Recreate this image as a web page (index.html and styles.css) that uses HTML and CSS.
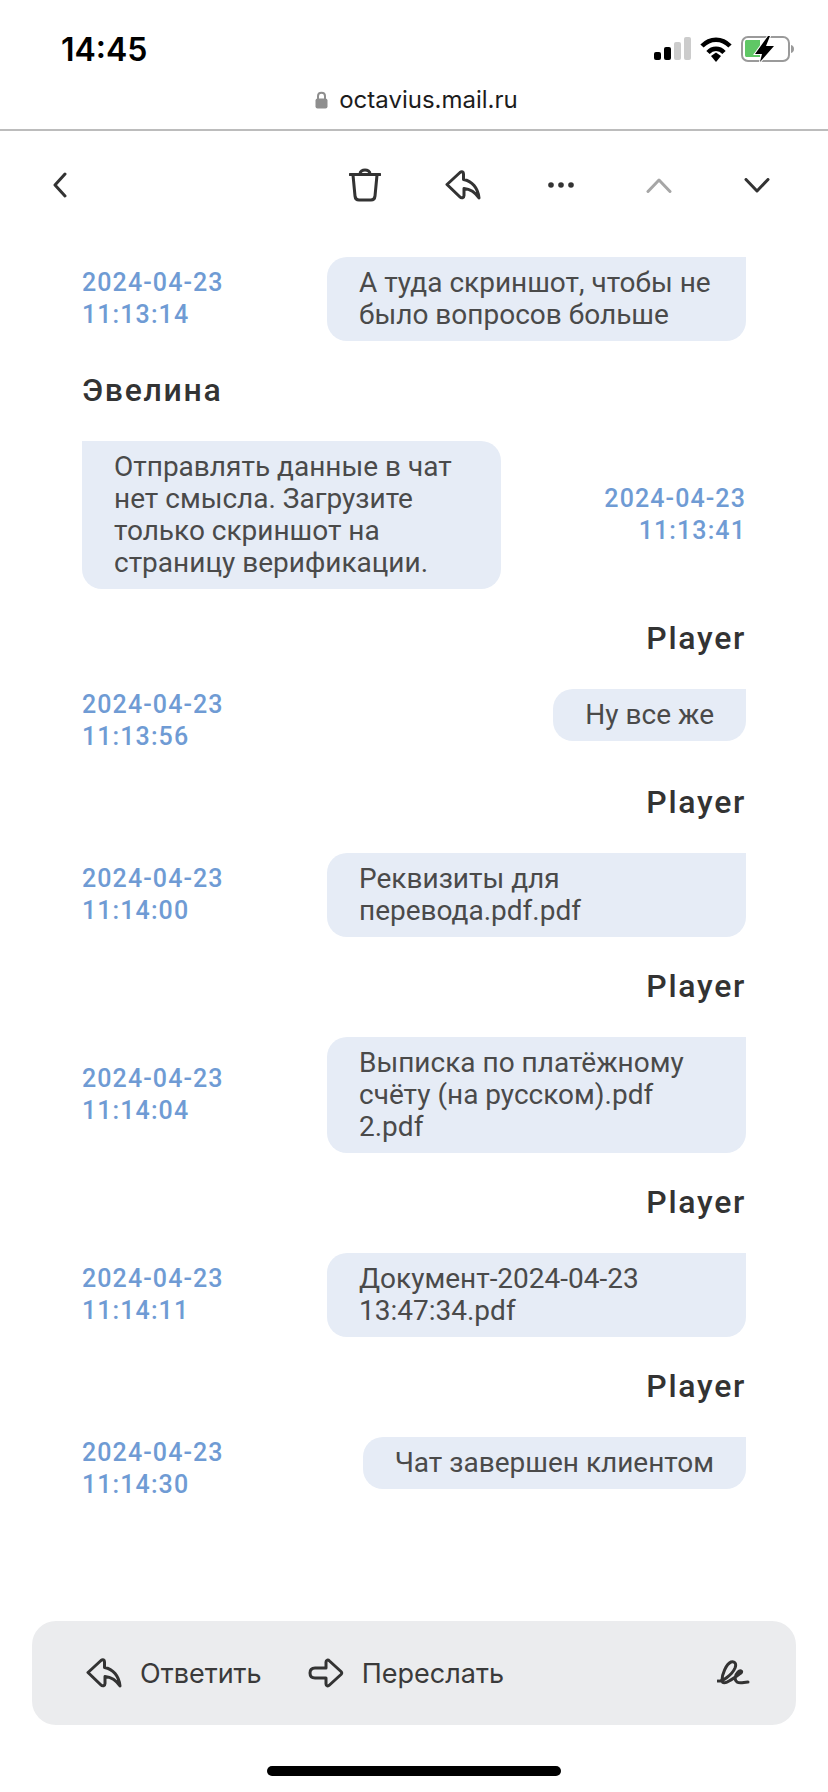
FILE: index.html
```html
<!DOCTYPE html>
<html lang="ru">
<head>
    <meta charset="UTF-8">
    <meta name="viewport" content="width=device-width, initial-scale=1.0">
    <title>octavius.mail.ru</title>
    <link rel="stylesheet" href="styles.css">
</head>
<body>
    <header class="status-bar">
        <span class="status-time">14:45</span>
        <div class="status-icons">
            <svg class="signal-icon" width="37" height="24" viewBox="0 0 37 24">
                <rect x="0" y="15" width="7" height="8" rx="2" fill="#000"/>
                <rect x="10" y="10" width="7" height="13" rx="2" fill="#000"/>
                <rect x="20" y="5" width="7" height="18" rx="2" fill="#ccc"/>
                <rect x="30" y="0" width="7" height="23" rx="2" fill="#ccc"/>
            </svg>
            <svg class="wifi-icon" width="32" height="25" viewBox="0 0 32 25">
                <path d="M2 9C10 0.500 22 0.500 30 9" fill="none" stroke="#000" stroke-width="4.500"/>
                <path d="M8 15.500C12.500 10.500 19.500 10.500 24 15.500" fill="none" stroke="#000" stroke-width="4.500"/>
                <path d="M11 19L16 15.500L21 19L16 25Z" fill="#000"/>
            </svg>
            <svg class="battery-icon" width="53" height="28" viewBox="0 0 53 28">
                <rect x="1" y="2" width="47" height="24" rx="6" fill="none" stroke="#9a9a9a" stroke-width="2"/>
                <path d="M50 10C52 10.500 53 12 53 14C53 16 52 17.500 50 18Z" fill="#9a9a9a"/>
                <path d="M6 5H19V22H6C4.500 22 4 21.500 4 20V7C4 5.500 4.500 5 6 5Z" fill="#5fc765"/>
                <path d="M27 1L14 19H21L19 27L33 11H25L29 1Z" fill="#000" stroke="#fff" stroke-width="2" paint-order="stroke"/>
            </svg>
        </div>
    </header>

    <div class="url-bar">
        <svg width="13" height="18" viewBox="0 0 13 18">
            <path d="M3 8V5C3 0.500 10 0.500 10 5V8" fill="none" stroke="#8e8e8e" stroke-width="2"/>
            <rect x="0.500" y="7.500" width="12" height="10" rx="2" fill="#8e8e8e"/>
        </svg>
        <span>octavius.mail.ru</span>
    </div>

    <nav class="toolbar">
        <button class="tool-btn back-btn">
            <svg width="14" height="26" viewBox="0 0 14 26"><path d="M12 2L2 13L12 24" class="line"/></svg>
        </button>
        <button class="tool-btn">
            <svg width="32" height="34" viewBox="0 0 32 34">
                <path d="M1 6.500H31" class="line"/>
                <path d="M11 6C11 0.500 21 0.500 21 6" class="line"/>
                <path d="M4 7L6 28C6.300 31 8 32 10 32H22C24 32 25.700 31 26 28L28 7" class="line"/>
            </svg>
        </button>
        <button class="tool-btn">
            <svg width="36" height="30" viewBox="0 0 36 30">
                <path d="M2 14.500L15 2.500C17 1 18.500 2 18.500 4V9.500C27 11 33 18 34 28C30 22 25 19 19 18.500V25.500C19 28 16.500 28.500 15 27Z" class="line"/>
            </svg>
        </button>
        <button class="tool-btn">
            <svg width="26" height="6" viewBox="0 0 26 6">
                <circle cx="3" cy="3" r="2.800" fill="#333"/>
                <circle cx="13" cy="3" r="2.800" fill="#333"/>
                <circle cx="23" cy="3" r="2.800" fill="#333"/>
            </svg>
        </button>
        <button class="tool-btn">
            <svg width="28" height="15" viewBox="0 0 28 15"><path d="M3 13.500L14 2L25 13.500" class="line line-muted"/></svg>
        </button>
        <button class="tool-btn">
            <svg width="28" height="15" viewBox="0 0 28 15"><path d="M3 1.500L14 13L25 1.500" class="line"/></svg>
        </button>
    </nav>

    <main class="chat">
        <div class="msg-row">
            <div class="msg-date">2024-04-23<br>11:13:14</div>
            <div class="bubble bubble-own">А туда скриншот, чтобы не было вопросов больше</div>
        </div>

        <div class="msg-name">Эвелина</div>
        <div class="msg-row">
            <div class="bubble bubble-other">Отправлять данные в чат нет смысла. Загрузите только скриншот на страницу верификации.</div>
            <div class="msg-date msg-date-right">2024-04-23<br>11:13:41</div>
        </div>

        <div class="msg-name msg-name-right">Player</div>
        <div class="msg-row">
            <div class="msg-date">2024-04-23<br>11:13:56</div>
            <div class="bubble bubble-own">Ну все же</div>
        </div>

        <div class="msg-name msg-name-right">Player</div>
        <div class="msg-row">
            <div class="msg-date">2024-04-23<br>11:14:00</div>
            <div class="bubble bubble-own">Реквизиты для перевода.pdf.pdf</div>
        </div>

        <div class="msg-name msg-name-right">Player</div>
        <div class="msg-row">
            <div class="msg-date">2024-04-23<br>11:14:04</div>
            <div class="bubble bubble-own">Выписка по платёжному счёту (на русском).pdf 2.pdf</div>
        </div>

        <div class="msg-name msg-name-right">Player</div>
        <div class="msg-row">
            <div class="msg-date">2024-04-23<br>11:14:11</div>
            <div class="bubble bubble-own">Документ-2024-04-23 13:47:34.pdf</div>
        </div>

        <div class="msg-name msg-name-right">Player</div>
        <div class="msg-row">
            <div class="msg-date">2024-04-23<br>11:14:30</div>
            <div class="bubble bubble-own">Чат завершен клиентом</div>
        </div>
    </main>

    <footer class="action-bar">
        <button class="action-btn">
            <svg width="36" height="30" viewBox="0 0 36 30">
                <path d="M2 14.500L15 2.500C17 1 18.500 2 18.500 4V9.500C27 11 33 18 34 28C30 22 25 19 19 18.500V25.500C19 28 16.500 28.500 15 27Z" class="line"/>
            </svg>
            <span>Ответить</span>
        </button>
        <button class="action-btn">
            <svg width="36" height="30" viewBox="0 0 36 30">
                <path d="M7 10H18V4C18 2 20 1.500 21.500 3L33 13.500C34 14.500 34 15.500 33 16.500L21.500 27C20 28.500 18 28 18 26V20H7C3 20 2 18 2 15C2 12 3 10 7 10Z" class="line"/>
            </svg>
            <span>Переслать</span>
        </button>
        <button class="sign-btn">
            <svg width="33" height="26" viewBox="0 0 33 26">
                <path d="M1 21C5 22 15 15 18 8C20 3 17 1 14 2C9 4 5 15 5 20C5 24 9 23 12 21C16 19 21 15 24 13C26 11 23 10 21 12C18 15 17 20 20 22C23 24 27 22 31 22" class="line"/>
            </svg>
        </button>
    </footer>

    <div class="home-bar"></div>
</body>
</html>
```

FILE: styles.css
```css
body {
    margin: 0;
    height: 1792px;
    overflow: hidden;
    display: flex;
    flex-direction: column;
    background-color: #fff;
    font-family: Roboto, sans-serif;
    color: #333;
}

button {
    background: none;
    border: none;
    padding: 0;
    font: inherit;
    color: inherit;
}

.line {
    fill: none;
    stroke: #333;
    stroke-width: 3;
    stroke-linecap: round;
    stroke-linejoin: round;
}

.line-muted {
    stroke: #a6a6a6;
}

.status-bar {
    height: 76px;
    padding: 22px 34px 0 61px;
    display: flex;
    align-items: center;
    justify-content: space-between;
    box-sizing: border-box;
}

.status-time {
    font-family: Inter, sans-serif;
    font-size: 32px;
    font-weight: 600;
    color: #000;
}

.status-icons {
    display: flex;
    align-items: center;
    gap: 9px;
}

.url-bar {
    height: 55px;
    box-sizing: border-box;
    border-bottom: 2px solid #bcbcbc;
    display: flex;
    align-items: center;
    justify-content: center;
    gap: 11px;
    font-family: Inter, sans-serif;
    font-size: 24px;
    color: #1c1c1c;
    padding: 0 0 6px 5px;
}

.toolbar {
    height: 126px;
    box-sizing: border-box;
    padding: 0 22px 18px 0;
    display: flex;
    align-items: center;
}

.tool-btn {
    width: 98px;
    height: 40px;
    display: flex;
    align-items: center;
    justify-content: center;
}

.back-btn {
    width: 120px;
    margin-right: auto;
}

.chat {
    flex: 1;
    padding: 0 82px;
    font-size: 28px;
    line-height: 32px;
}

.msg-row {
    display: flex;
    justify-content: space-between;
    align-items: flex-start;
}

.msg-date {
    align-self: center;
    color: #6f9bd4;
    font-weight: 500;
    font-size: 25px;
    letter-spacing: 1.100px;
}

.msg-date-right {
    text-align: right;
}

.bubble {
    max-width: 419px;
    box-sizing: border-box;
    padding: 10px 32px;
    background-color: #e6ecf6;
    color: #4a4a4a;
    border-radius: 20px;
}

.bubble-own {
    border-top-right-radius: 0;
}

.bubble-other {
    border-top-left-radius: 0;
}

.msg-name {
    margin: 33px 0 35px;
    font-size: 32px;
    font-weight: 500;
    letter-spacing: 1.700px;
}

.msg-name-right {
    text-align: right;
}

.action-bar {
    height: 104px;
    margin: 0 32px;
    padding: 0 46px 0 54px;
    border-radius: 24px;
    background-color: #ebecee;
    display: flex;
    align-items: center;
    gap: 46px;
}

.action-btn {
    display: flex;
    align-items: center;
    gap: 18px;
    font-family: Inter, sans-serif;
    font-size: 27px;
    color: #3a3a3a;
}

.sign-btn {
    margin-left: auto;
    display: flex;
}

.home-bar {
    width: 294px;
    height: 10px;
    margin: 41px auto 16px;
    border-radius: 5px;
    background-color: #000;
}
```
